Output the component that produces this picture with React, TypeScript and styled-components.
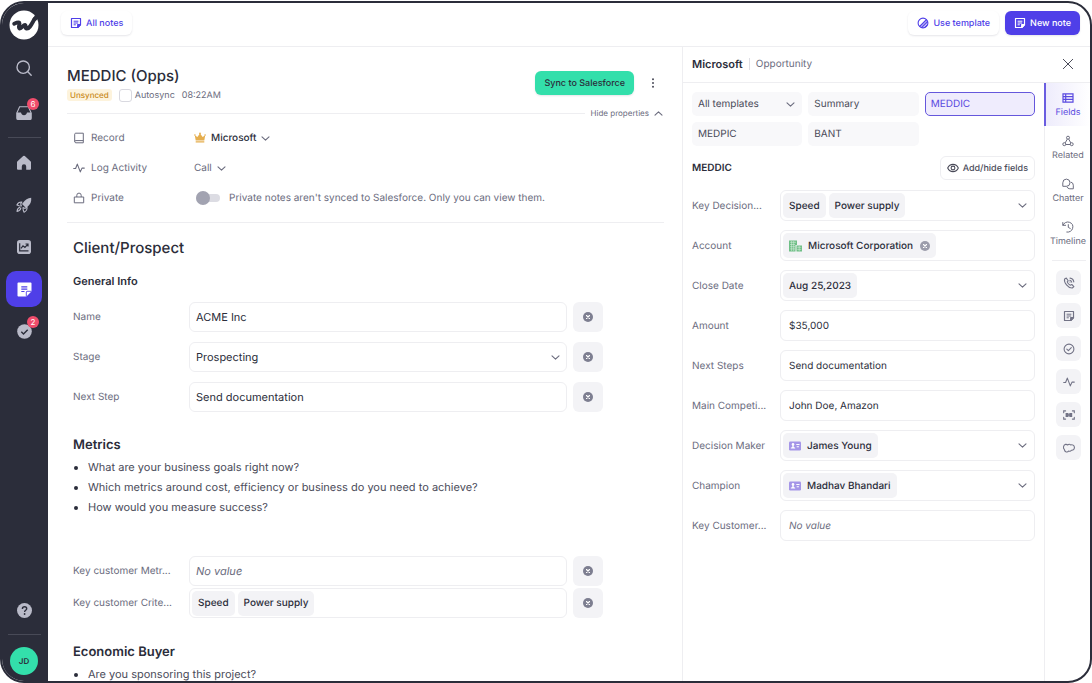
import React from "react";
import styled, { createGlobalStyle, css } from "styled-components";

const c = {
  ink: "#2b2d3a",
  body: "#4a4b59",
  muted: "#6b6c7e",
  line: "#eeeef1",
  chip: "#f3f3f6",
  purple: "#4f3fe8",
  green: "#33dfab",
  sideIcon: "#b9bac8",
};

const fs = { xxs: "8px", xs: "9px", sm: "10px", md: "11px", h2: "13px", h1: "15px" };

const GlobalStyle = createGlobalStyle`
  * { box-sizing: border-box; }
  body { margin: 0; background: #fff; text-rendering: geometricPrecision; }
  body, button, input, select { font-family: Inter, "Liberation Sans", sans-serif; color: ${c.ink}; }
  button, input, select { text-rendering: inherit; }
  button { border: 0; background: none; padding: 0; cursor: pointer; }
  h1, h2, h3, p, ul { margin: 0; padding: 0; font-weight: 500; }
  svg { display: block; flex: none; }
`;

/* ---------- Icons ---------- */

const NoteIcon = ({ size = 12 }: { size?: number }) => (
  <svg width={size} height={size} viewBox="0 0 12 12" fill="none" stroke="currentColor" strokeWidth="1.2" strokeLinejoin="round">
    <path d="M1.5 1.5h9v6.3l-2.7 2.7H1.5z" />
    <path d="M10.5 7.6H7.7v2.9z" fill="currentColor" />
    <path d="M3.6 4.2h4.8M3.6 6h4.6M3.6 7.8h2.2" strokeWidth="1" />
  </svg>
);

const TemplateIcon = () => (
  <svg width="12" height="12" viewBox="0 0 12 12" fill="none" stroke="currentColor" strokeWidth="1.1">
    <circle cx="6" cy="6" r="4.9" />
    <path d="M2.6 9.4 9.4 2.6M4.7 10.6l6-6M7.4 10.6l3.2-3.2" />
    <path d="M2.6 9.4 9.4 2.6 10.6 4.6 4.6 10.6z" fill="currentColor" fillOpacity=".45" stroke="none" />
  </svg>
);

const Chevron = ({ up = false }: { up?: boolean }) => (
  <svg width="9" height="9" viewBox="0 0 9 9" fill="none" stroke={c.muted} strokeWidth="1.1" strokeLinecap="round" strokeLinejoin="round">
    <path d={up ? "M1 6.2 4.5 2.8 8 6.2" : "M1 2.8 4.5 6.2 8 2.8"} />
  </svg>
);

const ClearIcon = ({ size = 10 }: { size?: number }) => (
  <svg width={size} height={size} viewBox="0 0 10 10">
    <circle cx="5" cy="5" r="5" fill="currentColor" />
    <path d="M3.5 3.5l3 3M6.5 3.5l-3 3" stroke="#fff" strokeWidth="1.1" strokeLinecap="round" />
  </svg>
);

const Logo = () => (
  <svg width="30" height="30" viewBox="0 0 30 30">
    <circle cx="15" cy="15" r="14.5" fill="#fff" />
    <path d="M5.200 13.800c2-.9 4.400-1.700 5.200-1 .9.900-1.700 4.700.1 5.600 1.800.8 3.800-3.700 5.500-3.400 1.400.3-.3 3.100 1.500 3.500 3 .6 5.200-4.600 8-9.400" fill="none" stroke={c.ink} strokeWidth="3.900" strokeLinecap="round" strokeLinejoin="round" />
    <path d="M23.200 9.500 27 3.500l3 4-3.200 3.500z" fill={c.ink} />
  </svg>
);

const SearchIcon = () => (
  <svg width="18" height="18" viewBox="0 0 18 18" fill="none" stroke="currentColor" strokeWidth="1.4" strokeLinecap="round">
    <circle cx="8.2" cy="8.2" r="6.2" />
    <path d="M12.8 12.8l3.4 3.4" />
  </svg>
);

const InboxIcon = () => (
  <svg width="16" height="16" viewBox="0 0 16 16">
    <path d="M3.600 1.800h8.800L15.200 8v5.200c0 .8-.5 1.300-1.300 1.300H2.100c-.8 0-1.300-.5-1.300-1.300V8z" fill="none" stroke="currentColor" strokeWidth="1.100" />
    <path d="M.8 7.600h4.200c.2 1.700 1.500 2.600 3 2.600s2.800-.9 3-2.600h4.200v5.600c0 .8-.5 1.400-1.300 1.400H2.100c-.8 0-1.300-.6-1.300-1.400z" fill="currentColor" />
  </svg>
);

const HomeIcon = () => (
  <svg width="16" height="16" viewBox="0 0 16 16" fill="currentColor">
    <path d="M7.200 1.100a1.200 1.200 0 0 1 1.600 0l5.700 5.100c.3.300.5.700.5 1.100v6.200c0 .8-.5 1.300-1.300 1.300h-3.500v-3.300a2.200 2.200 0 0 0-4.400 0v3.300H2.300c-.8 0-1.300-.5-1.300-1.300V7.300c0-.4.200-.8.500-1.100z" />
  </svg>
);

const RocketIcon = () => (
  <svg width="16" height="16" viewBox="0 0 16 16" fill="currentColor">
    <path d="M15.200.7c.4 3.900-.8 6.700-4 9.300l-1.200.9-4-4 1-1.200C9.300 2.600 11.600.9 15.200.7z" />
    <path d="M5.900 5 4.700 6.900 5.400 9 3 8.800.9 7.900C1.900 5.800 3.600 4.800 5.900 5zM11 10.100l-1.900 1.300-2.100-.8.200 2.400.9 2.200c2.200-1.100 3.200-2.800 2.900-5.100z" fill="none" stroke="currentColor" strokeWidth="1.100" strokeLinejoin="round" />
    <path d="M4.800 11.200c-.4 1.500-1.500 2.900-3.700 3.300.1-2 .9-3.500 2.700-4.200" fill="none" stroke="currentColor" strokeWidth="1.200" strokeLinejoin="round" strokeLinecap="round" />
  </svg>
);

const ChartIcon = () => (
  <svg width="14" height="14" viewBox="0 0 14 14">
    <rect width="14" height="14" rx="2.800" fill="currentColor" />
    <path d="M2.700 3.300v7.600h8.800M4 8.300l2-2.400 1.900 1.500 2.800-3.100M8.500 4h2.500v2.400" fill="none" stroke={c.ink} strokeWidth="1.200" />
  </svg>
);

const NoteSolidIcon = () => (
  <svg width="15" height="15" viewBox="0 0 15 15">
    <path d="M1.300.5h12.400c.4 0 .8.400.8.800v7.900l-5.300 5.300H1.300c-.4 0-.8-.4-.8-.8V1.300c0-.4.400-.8.800-.8z" fill="#fff" />
    <path d="M4.300 4.900h6M4.300 7.200h6M4.300 9.500h3.200" stroke={c.purple} strokeWidth="1.200" />
    <path d="M9.300 14.400V10c0-.4.300-.7.700-.7h4.400" fill="#fff" stroke={c.purple} strokeWidth=".9" />
  </svg>
);

const TaskSolidIcon = () => (
  <svg width="15" height="15" viewBox="0 0 15 15">
    <circle cx="7.500" cy="7.500" r="7.300" fill="currentColor" />
    <path d="M4.300 7.700l2.200 2.200 4.200-4.200" fill="none" stroke={c.ink} strokeWidth="1.400" />
  </svg>
);

const HelpIcon = () => (
  <svg width="15" height="15" viewBox="0 0 15 15">
    <circle cx="7.500" cy="7.500" r="7.500" fill="currentColor" />
    <path d="M5.400 5.900c0-1.300.9-2.100 2.200-2.100 1.200 0 2.100.8 2.100 1.900 0 1.600-2.100 1.600-2.100 3.200" fill="none" stroke={c.ink} strokeWidth="1.400" />
    <circle cx="7.600" cy="11" r=".9" fill={c.ink} />
  </svg>
);

const RecordIcon = () => (
  <svg width="12" height="12" viewBox="0 0 12 12" fill="none" stroke="currentColor" strokeWidth="1">
    <path d="M1.700 9.600V2.200c0-.6.400-1 1-1h7.600v9.600H2.900c-.7 0-1.200-.5-1.200-1.200s.5-1 1.200-1h7.400" strokeLinejoin="round" />
  </svg>
);

const ActivityIcon = () => (
  <svg width="12" height="12" viewBox="0 0 12 12" fill="none" stroke="currentColor" strokeWidth="1.100" strokeLinecap="round" strokeLinejoin="round">
    <path d="M.7 6.500h1.900l1.700-4.400 3 7.800 1.700-3.800h2.300" />
  </svg>
);

const LockIcon = () => (
  <svg width="12" height="12" viewBox="0 0 12 12" fill="none" stroke="currentColor" strokeWidth="1" strokeLinejoin="round">
    <path d="M1.300 5h9.400v5.800H1.300zM3.800 5V3.300a2.200 2.200 0 0 1 4.400 0V5" />
  </svg>
);

const CrownIcon = () => (
  <svg width="12" height="12" viewBox="0 0 12 12" fill="#e5ae4e">
    <path d="M.8 3.200 3.300 5 6 1.500 8.700 5l2.500-1.800-.9 5.300H1.700zM1.700 9.300h8.600v1.300H1.700z" />
    <circle cx=".9" cy="3" r=".8" />
    <circle cx="6" cy="1.500" r=".9" />
    <circle cx="11.100" cy="3" r=".8" />
  </svg>
);

const CloseIcon = () => (
  <svg width="12" height="12" viewBox="0 0 12 12" stroke="currentColor" strokeWidth="1" strokeLinecap="round">
    <path d="M1.300 1.300l9.400 9.400M10.700 1.300l-9.400 9.400" />
  </svg>
);

const EyeIcon = () => (
  <svg width="12" height="12" viewBox="0 0 12 12" fill="none" stroke="currentColor" strokeWidth="1.100">
    <path d="M.7 6C1.800 3.600 3.700 2.400 6 2.400S10.200 3.600 11.300 6C10.200 8.400 8.300 9.600 6 9.600S1.800 8.400.7 6z" />
    <circle cx="6" cy="6" r="1.900" />
  </svg>
);

const KebabIcon = () => (
  <svg width="10" height="10" viewBox="0 0 10 10" fill="currentColor">
    <circle cx="5" cy="1.300" r="1" />
    <circle cx="5" cy="5" r="1" />
    <circle cx="5" cy="8.700" r="1" />
  </svg>
);

const BuildingIcon = () => (
  <svg width="13" height="12" viewBox="0 0 13 12">
    <path d="M0 .5h8v4.500H6.500v6.500H0zM7.500 5.500H13v6H7.500z" fill="#6fbf86" />
    <path d="M1 2.300h6M1 4.500h5M1 6.700h5M1 8.900h5M2.600 1v10M4.700 1v10M8.300 7.300h4M8.300 9.400h4M10.200 6v5" stroke="#e3f2e8" strokeWidth=".5" />
  </svg>
);

const ContactIcon = () => (
  <svg width="12" height="10" viewBox="0 0 12 10">
    <rect y=".5" width="12" height="9" rx="1.200" fill="#a596e8" />
    <circle cx="4" cy="3.400" r="1.300" fill="#fff" />
    <path d="M3.300 4.300h1.400v1.600l1.500.8v.7H1.800v-.7l1.500-.8zM7.300 3h3.200v1H7.300zM7.700 5.200h2.200v1H7.700z" fill="#fff" />
  </svg>
);

const TableIcon = () => (
  <svg width="12" height="12" viewBox="0 0 12 12" fill="none" stroke="currentColor" strokeWidth="1.200">
    <path d="M1 1.800h10v8.400H1zM1 4.600h10M1 7.400h10M3.700 1.800v8.400" />
  </svg>
);

const RelatedIcon = () => (
  <svg width="12" height="12" viewBox="0 0 12 12" fill="none" stroke="currentColor" strokeWidth="1">
    <circle cx="6" cy="2.700" r="1.500" />
    <circle cx="2.300" cy="9.200" r="1.500" />
    <circle cx="9.700" cy="9.200" r="1.500" />
    <path d="M5.300 4.100 3.200 7.900M6.700 4.100l2.100 3.800M3.800 9.500h4.400" />
  </svg>
);

const ChatterIcon = () => (
  <svg width="12" height="12" viewBox="0 0 12 12" fill="none" stroke="currentColor" strokeWidth="1" strokeLinejoin="round">
    <path d="M.8 8.300V4.800A3.700 3.700 0 0 1 4.500 1.100 3.700 3.700 0 0 1 8 4.800a3.600 3.600 0 0 1-3.600 3.500z" />
    <path d="M8.700 4a3.300 3.300 0 0 1 2.600 3.200v3.600H7.800a3.400 3.400 0 0 1-3-2.100" />
  </svg>
);

const HistoryIcon = () => (
  <svg width="12" height="12" viewBox="0 0 12 12" fill="none" stroke="currentColor" strokeWidth="1" strokeLinecap="round" strokeLinejoin="round">
    <path d="M.8 1.500v2.800h2.800M1 4.100a5.100 5.100 0 1 1 3.800 7M6.300 3.600v2.800l2 1.100" />
  </svg>
);

const PhoneIcon = () => (
  <svg width="12" height="12" viewBox="0 0 12 12" fill="none" stroke="currentColor" strokeWidth="1.100" strokeLinejoin="round" strokeLinecap="round">
    <path d="M3.300 1.100 1.600 1.900C.6 5.300 5.200 11.300 9.300 11l1.600-1.400-2.100-2.100-1.500.7C5.800 7.500 4.700 6.300 4.200 4.900l1-1.100z" />
    <path d="M6.800 3.300c1.100.1 1.700.8 1.900 1.900M7 1.100c2.100.2 3.500 1.700 3.800 3.800M6.900 5h.2" />
  </svg>
);

const CheckCircleIcon = () => (
  <svg width="12" height="12" viewBox="0 0 12 12" fill="none" stroke="currentColor" strokeWidth="1.100" strokeLinecap="round" strokeLinejoin="round">
    <circle cx="6" cy="6" r="4.900" />
    <path d="M3.800 6.200l1.600 1.500 2.900-3" />
  </svg>
);

const CaptureIcon = () => (
  <svg width="12" height="12" viewBox="0 0 12 12" fill="none" stroke="currentColor" strokeWidth="1.100" strokeLinecap="round">
    <path d="M.7 3.800V1.900h1.900M9.400 1.900h1.900v1.900M.7 8.200v1.900h1.900M9.400 10.100h1.900V8.200" />
    <path d="M2.600 4h2.900v4H2.600zM6.300 4h2.900v4H6.300zM5 5.200h2v1.600H5z" fill="currentColor" stroke="none" />
  </svg>
);

const CloudIcon = () => (
  <svg width="12" height="12" viewBox="0 0 12 12" fill="none" stroke="currentColor" strokeWidth="1.100" strokeLinejoin="round">
    <path d="M1.300 7.400C-.1 6.200.3 2.900 2.500 2.400c1-.2 1.700.1 2.300.6.800-1 2.100-.9 2.900 0 1.700-.8 3.600.3 3.700 2.300.1 2-1.300 3.200-3 2.900-.6 1.100-1.800 1.400-2.800.8-1.100 1.800-4 1.200-4.300-1.600z" />
  </svg>
);

/* ---------- Frame and sidebar ---------- */

const Frame = styled.div`
  display: flex;
  height: calc(100vh - 1px);
  margin-top: 1px;
  border: 2px solid ${c.ink};
  border-radius: 24px;
  overflow: hidden;
  background: #fff;
`;

const Sidebar = styled.nav`
  display: flex;
  flex-direction: column;
  align-items: center;
  flex: none;
  width: 46px;
  padding: 7px 2px 6px 0;
  background: ${c.ink};
  color: ${c.sideIcon};
`;

const NavList = styled.div<{ $gap: number; $top: number }>`
  display: flex;
  flex-direction: column;
  align-items: center;
  gap: ${(p) => p.$gap}px;
  margin-top: ${(p) => p.$top}px;
`;

const NavButton = styled.button<{ $active?: boolean }>`
  position: relative;
  display: grid;
  place-items: center;
  width: 36px;
  height: 36px;
  border-radius: 10px;
  color: ${c.sideIcon};
  background: ${(p) => (p.$active ? c.purple : "none")};
`;

const NavBadge = styled.span`
  position: absolute;
  top: 3px;
  right: 3px;
  width: 12px;
  height: 12px;
  border-radius: 50%;
  background: #f04d6c;
  color: #fff;
  font-size: ${fs.xxs};
  line-height: 12px;
  text-align: center;
`;

const NavDivider = styled.hr`
  width: 33px;
  height: 1px;
  margin: 6px 0;
  border: 0;
  background: #484a57;
`;

const Spacer = styled.div`
  flex: 1;
`;

const Avatar = styled.button`
  width: 28px;
  height: 28px;
  margin-top: 6px;
  border-radius: 50%;
  background: ${c.green};
  font-size: ${fs.xxs};
  font-weight: 600;
`;

/* ---------- Page ---------- */

const Page = styled.div`
  display: flex;
  flex-direction: column;
  flex: 1;
  min-width: 0;
`;

const TopBar = styled.header`
  display: flex;
  align-items: center;
  flex: none;
  gap: 6px;
  height: 44px;
  padding: 0 10px 3px 13px;
  border-bottom: 1px solid ${c.line};
`;

const Button = styled.button<{ $kind?: "primary" | "green" | "outline" }>`
  display: inline-flex;
  align-items: center;
  justify-content: center;
  gap: 4px;
  height: 24px;
  padding: 0 9px;
  border-radius: 6px;
  font-size: ${fs.xs};
  font-weight: 500;
  white-space: nowrap;
  color: ${c.purple};
  box-shadow: 0 1px 2px rgba(40, 40, 70, 0.12);
  ${(p) => p.$kind === "primary" && css`background: ${c.purple}; color: #fff;`}
  ${(p) => p.$kind === "green" && css`background: ${c.green}; color: ${c.ink};`}
  ${(p) => p.$kind === "outline" && css`
    padding: 0 6px;
    border: 1px solid ${c.line};
    box-shadow: none;
    color: ${c.body};
  `}
`;

const Columns = styled.div`
  display: flex;
  flex: 1;
  min-height: 0;
`;

const Note = styled.main`
  flex: 1;
  min-width: 0;
  padding: 18px 18px 0 19px;
  overflow: hidden;
`;

const NoteHead = styled.div`
  display: flex;
  justify-content: space-between;
  align-items: center;
`;

const Title = styled.h1`
  font-size: ${fs.h1};
  line-height: 22px;
`;

const Meta = styled.div`
  display: flex;
  align-items: center;
  gap: 7px;
  height: 16px;
  font-size: ${fs.xs};
  color: ${c.muted};
`;

const Tag = styled.span`
  padding: 0 3px;
  border-radius: 3px;
  background: #fdf3dc;
  color: #c98a1b;
  font-size: ${fs.xxs};
  font-weight: 500;
  line-height: 12px;
`;

const CheckLabel = styled.label`
  display: flex;
  align-items: center;
  gap: 3px;
`;

const CheckBox = styled.input`
  appearance: none;
  width: 13px;
  height: 13px;
  margin: 0;
  border: 1px solid #d9d9e0;
  border-radius: 3px;
`;

const HeadActions = styled.div`
  display: flex;
  align-items: center;
  gap: 14px;
  padding: 0 6px 2px 0;
`;

const IconButton = styled.button`
  display: grid;
  place-items: center;
  color: ${c.body};
`;

const HideRow = styled.div`
  display: flex;
  align-items: center;
  gap: 6px;
  height: 16px;
  margin: 2px 0;
`;

const Rule = styled.hr`
  flex: 1;
  height: 1px;
  margin: 0;
  border: 0;
  background: ${c.line};
`;

const HideButton = styled.button`
  display: flex;
  align-items: center;
  gap: 5px;
  padding-right: 1px;
  font-size: ${fs.xxs};
  color: ${c.muted};
`;

const PropertyRow = styled.div`
  display: grid;
  grid-template-columns: 121px 1fr;
  align-items: center;
  height: 30px;
  padding-left: 6px;
  font-size: ${fs.sm};
  color: ${c.muted};
`;

const Inline = styled.div`
  display: flex;
  align-items: center;
  gap: 6px;
`;

const Picker = styled.button<{ $strong?: boolean }>`
  display: flex;
  align-items: center;
  justify-self: start;
  gap: 5px;
  font-size: ${fs.sm};
  font-weight: ${(p) => (p.$strong ? 500 : 400)};
  color: ${(p) => (p.$strong ? c.ink : c.muted)};
`;

const SwitchLabel = styled.label`
  display: flex;
  align-items: center;
  gap: 9px;
  padding-left: 2px;
`;

const Switch = styled.input`
  appearance: none;
  display: flex;
  align-items: center;
  width: 24px;
  height: 8px;
  margin: 0;
  border-radius: 4px;
  background: #dcdce3;
  &::before {
    content: "";
    width: 14px;
    height: 14px;
    border-radius: 50%;
    background: #a2a3b1;
  }
`;

const NoteBody = styled.div`
  margin-top: 9px;
  padding: 15px 61px 0 6px;
  border-top: 1px solid ${c.line};
`;

const SectionTitle = styled.h2`
  font-size: ${fs.h1};
  font-weight: 500;
  line-height: 20px;
`;

const Heading = styled.h2<{ $top?: number }>`
  margin-top: ${(p) => p.$top ?? 0}px;
  font-size: ${fs.h2};
  font-weight: 600;
  line-height: 20px;
`;

const SubHeading = styled.h3`
  margin: 15px 0 13px;
  font-size: ${fs.md};
  font-weight: 600;
  line-height: 16px;
`;

const FormList = styled.div<{ $gap: number; $top?: number }>`
  display: grid;
  gap: ${(p) => p.$gap}px;
  margin-top: ${(p) => p.$top ?? 0}px;
`;

const FormRow = styled.div`
  display: grid;
  grid-template-columns: 110px 1fr 30px;
  column-gap: 6px;
  align-items: center;
`;

const PanelRow = styled.div`
  display: grid;
  grid-template-columns: 80px 1fr;
  column-gap: 8px;
  align-items: center;
`;

const FieldLabel = styled.label`
  font-size: ${fs.sm};
  color: ${c.muted};
  white-space: nowrap;
`;

const box = css`
  width: 100%;
  border: 1px solid ${c.line};
  border-radius: 6px;
  background: #fff;
`;

const TextBox = styled.input<{ $tall?: boolean }>`
  ${box}
  height: ${(p) => (p.$tall ? 31 : 30)}px;
  padding: 0 ${(p) => (p.$tall ? 8 : 6)}px;
  font-size: ${(p) => (p.$tall ? fs.sm : fs.md)};
  &::placeholder { color: ${c.muted}; font-style: italic; opacity: 1; }
`;

const SelectWrap = styled.div`
  display: grid;
  align-items: center;
  min-width: 0;
  > * { grid-area: 1 / 1; }
  > svg { justify-self: end; margin-right: 7px; pointer-events: none; }
`;

const SelectBox = styled.select`
  ${box}
  appearance: none;
  height: 30px;
  padding: 0 6px;
  font-size: ${fs.md};
`;

const ChipBox = styled.div<{ $tall?: boolean }>`
  ${box}
  display: flex;
  align-items: center;
  gap: 3px;
  height: ${(p) => (p.$tall ? 31 : 30)}px;
  padding: 0 7px 0 2px;
  > button { margin-left: auto; }
`;

const Chip = styled.span`
  display: inline-flex;
  align-items: center;
  gap: 6px;
  height: 25px;
  padding: 0 6px;
  border-radius: 5px;
  background: ${c.chip};
  font-size: ${fs.sm};
  font-weight: 500;
  white-space: nowrap;
`;

const ChipClear = styled(IconButton)`
  margin-left: 1px;
  color: #9c9dab;
`;

const ClearButton = styled.button`
  display: grid;
  place-items: center;
  width: 30px;
  height: 30px;
  border-radius: 6px;
  background: ${c.chip};
  color: #7d7e90;
`;

const Bullets = styled.ul`
  margin-top: 2px;
  padding-left: 15px;
  font-size: ${fs.md};
  line-height: 20px;
  color: ${c.body};
  font-weight: 400;
  li::marker { color: ${c.ink}; }
`;

/* ---------- Side panel ---------- */

const Panel = styled.aside`
  display: flex;
  flex-direction: column;
  flex: none;
  width: 408px;
  border-left: 1px solid ${c.line};
`;

const PanelHead = styled.div`
  display: flex;
  align-items: center;
  gap: 6px;
  flex: none;
  height: 36px;
  padding: 0 16px 1px 9px;
  border-bottom: 1px solid ${c.line};
  font-size: ${fs.sm};
  color: ${c.muted};
  > button { margin-left: auto; }
`;

const PanelTitle = styled.h2`
  font-size: ${fs.md};
  font-weight: 600;
  color: ${c.ink};
`;

const Pipe = styled.span`
  width: 1px;
  height: 12px;
  background: #dedee4;
`;

const Fields = styled.section`
  flex: 1;
  min-width: 0;
  padding: 9px;
`;

const TemplateGrid = styled.div`
  display: grid;
  grid-template-columns: repeat(3, 1fr);
  gap: 6px;
`;

const templateBox = css`
  width: 100%;
  height: 24px;
  padding: 0 6px;
  border: 0;
  border-radius: 5px;
  background: #f8f8fa;
  color: ${c.body};
  font-size: ${fs.sm};
  text-align: left;
`;

const TemplateSelect = styled.select`
  ${templateBox}
  appearance: none;
`;

const TemplateButton = styled.button<{ $active?: boolean }>`
  ${templateBox}
  ${(p) => p.$active && css`
    border: 1px solid #6557dc;
    background: #efecfd;
    color: #5a4ae0;
    padding: 0 5px;
  `}
`;

const FieldsHead = styled.div`
  display: flex;
  align-items: center;
  justify-content: space-between;
  margin: 10px 0;
`;

const FieldsTitle = styled.h3`
  font-size: ${fs.sm};
  font-weight: 600;
`;

const Rail = styled.div`
  display: flex;
  flex-direction: column;
  align-items: center;
  flex: none;
  width: 46px;
  padding-left: 2px;
  border-left: 1px solid ${c.line};
`;

const RailTab = styled.button<{ $active?: boolean }>`
  display: flex;
  flex-direction: column;
  align-items: center;
  justify-content: center;
  gap: 3px;
  width: 46px;
  height: 43px;
  margin-left: -3px;
  padding-top: 1px;
  border-left: 2px solid ${(p) => (p.$active ? "#6a5de0" : "transparent")};
  background: ${(p) => (p.$active ? "linear-gradient(90deg, #eeecfc, #fff)" : "none")};
  color: ${(p) => (p.$active ? "#5a4ae0" : c.muted)};
  font-size: ${fs.xs};
  line-height: 12px;
`;

const RailDivider = styled.hr`
  width: 34px;
  height: 1px;
  margin: 5px 0 9px;
  border: 0;
  background: ${c.line};
`;

const RailActions = styled.div`
  display: grid;
  gap: 8px;
`;

const RailAction = styled.button`
  display: grid;
  place-items: center;
  width: 25px;
  height: 25px;
  border-radius: 6px;
  background: ${c.chip};
  color: #727386;
`;

type NoteField = { label: string; value?: string; options?: string[]; chips?: string[] };

const generalFields: NoteField[] = [
  { label: "Name", value: "ACME Inc" },
  { label: "Stage", options: ["Prospecting"] },
  { label: "Next Step", value: "Send documentation" },
];

const metricFields: NoteField[] = [
  { label: "Key customer Metr...", value: "" },
  { label: "Key customer Crite...", chips: ["Speed", "Power supply"] },
];

type PanelField = { label: string; value?: string; chips?: string[]; icon?: React.ReactNode; removable?: boolean };

const panelFields: PanelField[] = [
  { label: "Key Decision...", chips: ["Speed", "Power supply"] },
  { label: "Account", chips: ["Microsoft Corporation"], icon: <BuildingIcon />, removable: true },
  { label: "Close Date", chips: ["Aug 25,2023"] },
  { label: "Amount", value: "$35,000" },
  { label: "Next Steps", value: "Send documentation" },
  { label: "Main Competi...", value: "John Doe, Amazon" },
  { label: "Decision Maker", chips: ["James Young"], icon: <ContactIcon /> },
  { label: "Champion", chips: ["Madhav Bhandari"], icon: <ContactIcon /> },
  { label: "Key Customer...", value: "" },
];

const NoteFieldRow = ({ field, id }: { field: NoteField; id: string }) => (
  <FormRow>
    <FieldLabel htmlFor={id}>{field.label}</FieldLabel>
    {field.options ? (
      <SelectWrap>
        <SelectBox id={id}>
          {field.options.map((o) => <option key={o}>{o}</option>)}
        </SelectBox>
        <Chevron />
      </SelectWrap>
    ) : field.chips ? (
      <ChipBox id={id} role="group" aria-label={field.label}>
        {field.chips.map((x) => <Chip key={x}>{x}</Chip>)}
      </ChipBox>
    ) : (
      <TextBox id={id} defaultValue={field.value} placeholder="No value" />
    )}
    <ClearButton aria-label={`Clear ${field.label}`}><ClearIcon /></ClearButton>
  </FormRow>
);

const PanelFieldRow = ({ field, id }: { field: PanelField; id: string }) => (
  <PanelRow>
    <FieldLabel htmlFor={id}>{field.label}</FieldLabel>
    {field.chips ? (
      <ChipBox $tall role="group" aria-label={field.label}>
        {field.chips.map((x) => (
          <Chip key={x}>
            {field.icon}
            {x}
            {field.removable && <ChipClear id={id} aria-label={`Remove ${x}`}><ClearIcon /></ChipClear>}
          </Chip>
        ))}
        {!field.removable && <IconButton id={id} aria-label={`Choose ${field.label}`}><Chevron /></IconButton>}
      </ChipBox>
    ) : (
      <TextBox $tall id={id} defaultValue={field.value} placeholder="No value" />
    )}
  </PanelRow>
);

export default function App() {
  return (
    <>
      <GlobalStyle />
      <Frame>
        <Sidebar aria-label="Main">
          <Logo />
          <NavList $gap={9} $top={10}>
            <NavButton aria-label="Search"><SearchIcon /></NavButton>
            <NavButton aria-label="Inbox"><InboxIcon /><NavBadge>6</NavBadge></NavButton>
          </NavList>
          <NavDivider />
          <NavList $gap={6} $top={1}>
            <NavButton aria-label="Home"><HomeIcon /></NavButton>
            <NavButton aria-label="Launch"><RocketIcon /></NavButton>
            <NavButton aria-label="Insights"><ChartIcon /></NavButton>
            <NavButton aria-label="Notes" $active><NoteSolidIcon /></NavButton>
            <NavButton aria-label="Tasks"><TaskSolidIcon /><NavBadge>2</NavBadge></NavButton>
          </NavList>
          <Spacer />
          <NavButton aria-label="Help"><HelpIcon /></NavButton>
          <NavDivider />
          <Avatar aria-label="Account menu">JD</Avatar>
        </Sidebar>

        <Page>
          <TopBar>
            <Button><NoteIcon />All notes</Button>
            <Spacer />
            <Button><TemplateIcon />Use template</Button>
            <Button $kind="primary"><NoteIcon />New note</Button>
          </TopBar>

          <Columns>
            <Note>
              <NoteHead>
                <div>
                  <Title>MEDDIC (Opps)</Title>
                  <Meta>
                    <Tag>Unsynced</Tag>
                    <CheckLabel><CheckBox type="checkbox" />Autosync</CheckLabel>
                    <span>08:22AM</span>
                  </Meta>
                </div>
                <HeadActions>
                  <Button $kind="green">Sync to Salesforce</Button>
                  <IconButton aria-label="More actions"><KebabIcon /></IconButton>
                </HeadActions>
              </NoteHead>
              <HideRow>
                <Rule />
                <HideButton>Hide properties<Chevron up /></HideButton>
              </HideRow>
              <PropertyRow>
                <Inline><RecordIcon />Record</Inline>
                <Picker $strong><CrownIcon />Microsoft<Chevron /></Picker>
              </PropertyRow>
              <PropertyRow>
                <Inline><ActivityIcon />Log Activity</Inline>
                <Picker>Call<Chevron /></Picker>
              </PropertyRow>
              <PropertyRow>
                <Inline><LockIcon />Private</Inline>
                <SwitchLabel>
                  <Switch type="checkbox" role="switch" />
                  Private notes aren't synced to Salesforce. Only you can view them.
                </SwitchLabel>
              </PropertyRow>

              <NoteBody>
                <SectionTitle>Client/Prospect</SectionTitle>
                <SubHeading>General Info</SubHeading>
                <FormList $gap={10}>
                  {generalFields.map((f, i) => <NoteFieldRow key={f.label} field={f} id={`general-${i}`} />)}
                </FormList>
                <Heading $top={23}>Metrics</Heading>
                <Bullets>
                  <li>What are your business goals right now?</li>
                  <li>Which metrics around cost, efficiency or business do you need to achieve?</li>
                  <li>How would you measure success?</li>
                </Bullets>
                <FormList $gap={2} $top={39}>
                  {metricFields.map((f, i) => <NoteFieldRow key={f.label} field={f} id={`metric-${i}`} />)}
                </FormList>
                <Heading $top={24}>Economic Buyer</Heading>
                <Bullets>
                  <li>Are you sponsoring this project?</li>
                </Bullets>
              </NoteBody>
            </Note>

            <Panel>
              <PanelHead>
                <PanelTitle>Microsoft</PanelTitle>
                <Pipe />
                <span>Opportunity</span>
                <IconButton aria-label="Close panel"><CloseIcon /></IconButton>
              </PanelHead>
              <Columns>
                <Fields>
                  <TemplateGrid>
                    <SelectWrap>
                      <TemplateSelect aria-label="Template filter"><option>All templates</option></TemplateSelect>
                      <Chevron />
                    </SelectWrap>
                    <TemplateButton>Summary</TemplateButton>
                    <TemplateButton $active>MEDDIC</TemplateButton>
                    <TemplateButton>MEDPIC</TemplateButton>
                    <TemplateButton>BANT</TemplateButton>
                  </TemplateGrid>
                  <FieldsHead>
                    <FieldsTitle>MEDDIC</FieldsTitle>
                    <Button $kind="outline"><EyeIcon />Add/hide fields</Button>
                  </FieldsHead>
                  <FormList $gap={9}>
                    {panelFields.map((f, i) => <PanelFieldRow key={f.label} field={f} id={`panel-${i}`} />)}
                  </FormList>
                </Fields>
                <Rail>
                  <RailTab $active><TableIcon />Fields</RailTab>
                  <RailTab><RelatedIcon />Related</RailTab>
                  <RailTab><ChatterIcon />Chatter</RailTab>
                  <RailTab><HistoryIcon />Timeline</RailTab>
                  <RailDivider />
                  <RailActions>
                    <RailAction aria-label="Log call"><PhoneIcon /></RailAction>
                    <RailAction aria-label="Add note"><NoteIcon /></RailAction>
                    <RailAction aria-label="Add task"><CheckCircleIcon /></RailAction>
                    <RailAction aria-label="Activity"><ActivityIcon /></RailAction>
                    <RailAction aria-label="Capture"><CaptureIcon /></RailAction>
                    <RailAction aria-label="Open in Salesforce"><CloudIcon /></RailAction>
                  </RailActions>
                </Rail>
              </Columns>
            </Panel>
          </Columns>
        </Page>
      </Frame>
    </>
  );
}
